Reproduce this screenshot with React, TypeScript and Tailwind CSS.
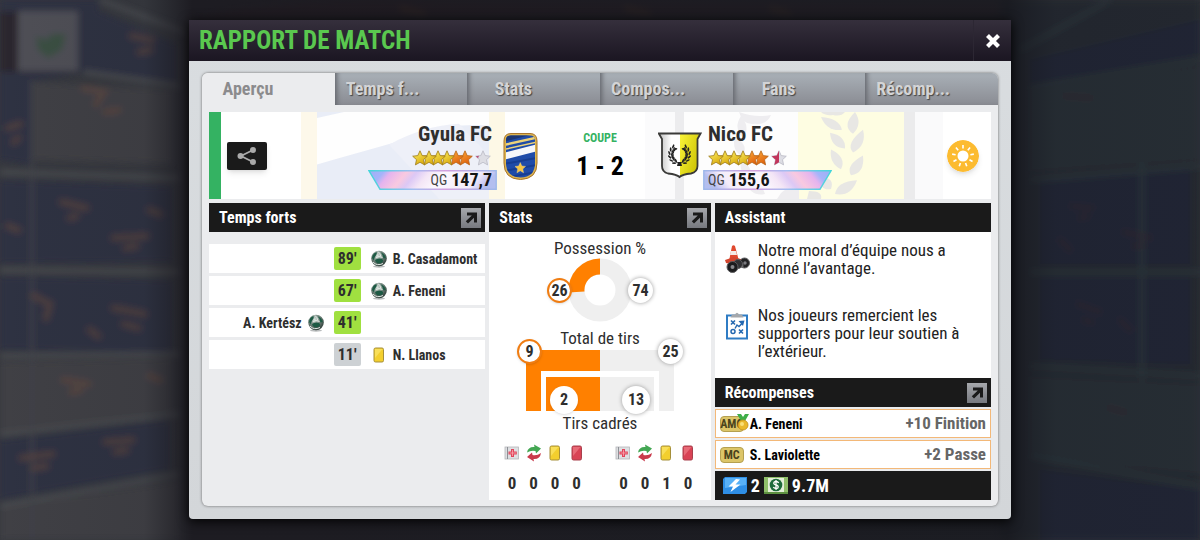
import { useState } from 'react';

const tabs = ['Aperçu', 'Temps f...', 'Stats', 'Compos...', 'Fans', 'Récomp...'];

interface MatchEvent {
  minute: string;
  player: string;
  side: 'home' | 'away';
  type: 'goal' | 'yellow';
}

const events: MatchEvent[] = [
  { minute: "89'", player: 'B. Casadamont', side: 'away', type: 'goal' },
  { minute: "67'", player: 'A. Feneni', side: 'away', type: 'goal' },
  { minute: "41'", player: 'A. Kertész', side: 'home', type: 'goal' },
  { minute: "11'", player: 'N. Llanos', side: 'away', type: 'yellow' },
];

const rewards = [
  { position: 'AMC', player: 'A. Feneni', bonus: '+10 Finition', medal: true },
  { position: 'MC', player: 'S. Laviolette', bonus: '+2 Passe', medal: false },
];

const STAR = 'M8 0.8 L10.2 5.6 L15.3 6.2 L11.5 9.7 L12.6 14.9 L8 12.3 L3.4 14.9 L4.5 9.7 L0.7 6.2 L5.8 5.6 Z';

// Blurred stadium wall behind the dialog
function Backdrop() {
  return (
    <svg className="absolute inset-0 h-full w-full" viewBox="0 0 1200 540" preserveAspectRatio="xMidYMid slice" aria-hidden="true">
      <defs>
        <filter id="soft" x="-5%" y="-5%" width="110%" height="110%">
          <feGaussianBlur stdDeviation="3" />
        </filter>
        <linearGradient id="shade" x1="0" x2="1">
          <stop offset="0" stopColor="#1b1c22" stopOpacity="0" />
          <stop offset="0.12" stopColor="#1b1c22" stopOpacity="0.1" />
          <stop offset="0.16" stopColor="#17151b" stopOpacity="0.8" />
          <stop offset="0.84" stopColor="#17181e" stopOpacity="0.85" />
          <stop offset="0.88" stopColor="#1a1e26" stopOpacity="0.35" />
          <stop offset="1" stopColor="#1a1e26" stopOpacity="0.25" />
        </linearGradient>
      </defs>
      <rect width="1200" height="540" fill="#36383e" />
      <g filter="url(#soft)">
        <path d="M0 0H100L85 72L30 82H0Z M92 8L176 44V82L84 70Z M0 80H30V165L0 160Z M0 180L172 186V262L0 264Z M0 276L172 280V352L0 350Z M0 440L170 420V470L0 500Z" fill="#2e3042" />
        <path d="M34 82L172 90V164L34 160Z M0 362L172 358V412L0 432Z M0 508L180 480V540H0Z" fill="#404145" />
        <path d="M0 172L180 178 M0 270L180 272 M0 356L180 354 M0 434L180 414 M0 506L180 474 M84 72L180 86 M100 0L190 34" fill="none" stroke="#484b50" strokeWidth="5" />
        <path d="M32 80V540" stroke="#404349" strokeWidth="3" />
        <rect x="1000" width="200" height="540" fill="#252b32" />
        <path d="M1030 60L1200 20V54L1030 84Z M1040 182L1190 170V265H1040Z M1040 278H1190V364L1040 360Z M1040 470L1200 490V540H1040Z" fill="#212638" />
        <path d="M1030 92L1200 66V160L1030 172Z M1030 376L1200 384V474L1030 458Z" fill="#293037" />
        <path d="M1020 50L1110 0 M1030 88L1200 60 M1030 180L1200 166 M1030 272H1200 M1030 366L1200 376 M1030 456L1200 486 M1142 160V380" fill="none" stroke="#2e383d" strokeWidth="5" />
        <path d="M190 18Q300 -4 440 2H1000V16H190Z" fill="#3c2e34" />
        <path d="M400 8L425 14 M625 8L650 14 M770 8L790 14" stroke="#6a4830" strokeWidth="4" />
        <g fill="none" stroke="#684a40" strokeLinecap="round" strokeWidth="7" opacity="0.5">
          <path d="M84 88L104 92L96 104M106 112L118 110M132 36L152 40M140 52L150 50M8 128L20 124M14 142L18 138M62 202L86 208M70 218L76 216" />
          <path d="M114 238L146 236M126 248L136 246M34 296L50 304L46 318M114 308L144 314M124 324L138 328M64 380L88 384M72 392L80 390" />
          <path d="M22 458L52 454M34 468L46 466M106 442L132 440M116 452L126 450M150 210L160 214M8 226L18 230M90 330L98 336M150 376L160 380" />
        </g>
        <g fill="none" stroke="#402c30" strokeLinecap="round" strokeWidth="6" opacity="0.4">
          <path d="M1072 206L1092 208M1080 218L1088 216M1124 232L1150 238M1134 246L1142 246M1078 304L1100 312M1084 320L1092 322M1066 96L1090 98M1110 408L1124 412M1060 240L1070 250M1120 320L1130 330" />
        </g>
        <rect x="0" y="12" width="78" height="60" fill="#29282f" />
        <rect x="18" y="11" width="60" height="60" fill="#504f57" />
        <path d="M36 36L46 40L52 34L66 34L62 50L48 58L38 50Z" fill="#35503f" opacity="0.8" />
      </g>
      <rect width="1200" height="540" fill="url(#shade)" />
    </svg>
  );
}

function Stars({ half = false }: { half?: boolean }) {
  return (
    <svg className="h-4 w-20" viewBox="0 0 80 16" role="img" aria-label="Étoiles">
      <defs>
        <linearGradient id="gold" x2="0.6" y2="1">
          <stop stopColor="#fff56a" />
          <stop offset="1" stopColor="#d9a90c" />
        </linearGradient>
        <linearGradient id="amber" x2="0.6" y2="1">
          <stop stopColor="#ffb03c" />
          <stop offset="1" stopColor="#dd5f0c" />
        </linearGradient>
        <clipPath id="halfStar">
          <rect width="8" height="16" />
        </clipPath>
      </defs>
      {[45, 36].map((x) => (
        <path key={x} d={STAR} transform={`translate(${x} 0)`} fill="url(#amber)" stroke="#b5661a" strokeWidth="0.8" />
      ))}
      {[27, 18, 9, 0].map((x) => (
        <path key={x} d={STAR} transform={`translate(${x} 0)`} fill="url(#gold)" stroke="#9c7a1c" strokeWidth="0.8" />
      ))}
      <g transform="translate(63 0)">
        <path d={STAR} fill="#dddde4" stroke="#b9b9c4" strokeWidth="0.8" />
        {half ? <path d={STAR} fill="#c2365c" clipPath="url(#halfStar)" /> : <path d="M0.7 6.2L4 5.8L3 8.3Z" fill="#b8507a" />}
      </g>
    </svg>
  );
}

function Ribbon({ value, side }: { value: string; side: 'home' | 'away' }) {
  const home = side === 'home';
  return (
    <div className={`relative flex h-5 w-[129px] items-center ${home ? 'justify-end pr-[5px]' : 'pl-[5px]'}`}>
      <svg className="absolute inset-0 h-full w-full" viewBox="0 0 129 20" aria-hidden="true">
        <defs>
          <linearGradient id={`holo-${side}`} x1={home ? 0 : 1} x2={home ? 1 : 0} y1="0" y2="0.12">
            <stop offset="0.02" stopColor="#9fb0f5" />
            <stop offset="0.12" stopColor="#a5b4fa" />
            <stop offset="0.18" stopColor="#e5b4ee" />
            <stop offset="0.3" stopColor="#f9c9e0" />
            <stop offset="0.38" stopColor="#dcc8f5" />
            <stop offset="0.48" stopColor="#f4e6f6" />
            <stop offset="0.6" stopColor="#fbf7fd" />
            <stop offset="0.88" stopColor="#f4ecf9" />
            <stop offset="0.97" stopColor="#c9caf3" />
            <stop offset="1" stopColor="#b3beef" />
          </linearGradient>
          <linearGradient id={`edge-${side}`} x1={home ? 0 : 1} x2={home ? 1 : 0}>
            <stop offset="0" stopColor="#43d5da" />
            <stop offset="0.35" stopColor="#a3bdf0" />
            <stop offset="0.6" stopColor="#d3a0de" />
            <stop offset="1" stopColor="#9db8ea" />
          </linearGradient>
        </defs>
        <path
          d={home ? 'M1 0.8H128.2V19.2H12Z' : 'M0.8 0.8H128L117 19.2H0.8Z'}
          fill={`url(#holo-${side})`}
          stroke={`url(#edge-${side})`}
          strokeWidth="1.4"
        />
      </svg>
      <span className="relative text-sm leading-5 text-[#444]">QG</span>
      <span className="relative ml-1 text-lg leading-5 font-bold text-[#151515]">{value}</span>
    </div>
  );
}

function HomeCrest() {
  return (
    <svg className="h-12 w-11" viewBox="0 0 44 48" role="img" aria-label="Gyula FC">
      <defs>
        <clipPath id="homeShape">
          <path d="M8 8Q8 3.500 13 3.500H32Q37 3.500 37 8V31Q37 45 22.500 45.500Q8 45 8 31Z" />
        </clipPath>
      </defs>
      <path d="M6 9Q6 1.500 13 1.500H32Q39 1.500 39 9V31Q39 47 22.500 47.500Q6 47 6 31Z" fill="#dcb550" stroke="#a9742b" strokeWidth="1" />
      <g clipPath="url(#homeShape)">
        <rect width="44" height="48" fill="#1f4ba8" />
        <path d="M0 32L44 24V26L0 34Z M0 39L44 31V33L0 41Z M0 46L44 38V40L0 48Z" fill="#173d90" />
        <path d="M5 3H32L5 10Z" fill="#1c3672" />
        <path d="M5 12L40 4V6.500L5 14.500Z" fill="#ecd27a" />
        <path d="M5 17L40 9V10.500L5 18.500Z" fill="#ecd27a" />
        <path d="M5 21L40 12V19L5 28Z" fill="#f6f7fb" />
      </g>
      <path d={STAR} transform="translate(16.500 30) scale(0.72)" fill="#f6c544" stroke="#f0d88a" strokeWidth="0.6" />
    </svg>
  );
}

function AwayCrest() {
  const leaves = [0, 1, 2, 3, 4, 5];
  return (
    <svg className="h-12 w-11" viewBox="0 0 44 48" role="img" aria-label="Nico FC">
      <defs>
        <clipPath id="awayShape">
          <path d="M0.800 1.500H42.500L39.500 7V34Q39.500 40 33 41.500Q24 42.500 21.500 45Q19 42.500 10 41.500Q4 40 4 34V7Z" />
        </clipPath>
        <linearGradient id="silver" x2="1">
          <stop stopColor="#b9b9b9" />
          <stop offset="0.6" stopColor="#fff" />
        </linearGradient>
        <linearGradient id="lemon" x2="1" y2="0.6">
          <stop stopColor="#fbf53a" />
          <stop offset="1" stopColor="#c9bf00" />
        </linearGradient>
      </defs>
      <g clipPath="url(#awayShape)">
        <rect width="22" height="48" fill="url(#silver)" />
        <rect x="22" width="22" height="48" fill="url(#lemon)" />
      </g>
      <path d="M0.800 1.500H42.500L39.500 7V34Q39.500 40 33 41.500Q24 42.500 21.500 45Q19 42.500 10 41.500Q4 40 4 34V7Z" fill="none" stroke="#3a3a38" strokeWidth="1.800" />
      <path d="M20.500 31Q14 29 13.500 23Q13.500 18 17 15 M22.500 31Q29 29 29.500 23Q29.500 18 26 15" fill="none" stroke="#222" strokeWidth="0.8" />
      <g fill="#222">
        {leaves.map((i) => {
          const a = 52 - i * 22;
          return (
            <g key={i}>
              <g transform={`rotate(${a} 21.500 22.500) translate(13 22.500)`}>
                <ellipse rx="0.900" ry="2.200" transform="translate(-1.700 0) rotate(-30)" />
                <ellipse rx="0.900" ry="2.200" transform="translate(1.500 0) rotate(30)" />
              </g>
              <g transform={`rotate(${-a} 21.500 22.500) translate(30 22.500)`}>
                <ellipse rx="0.900" ry="2.200" transform="translate(1.700 0) rotate(30)" />
                <ellipse rx="0.900" ry="2.200" transform="translate(-1.500 0) rotate(-30)" />
              </g>
            </g>
          );
        })}
        <path d="M20 30H23L24 34H19Z" />
      </g>
    </svg>
  );
}

// Washed-out flags of both clubs behind the score
function BannerFlags() {
  return (
    <svg className="absolute inset-0 h-full w-full" viewBox="0 0 782 88" preserveAspectRatio="none" aria-hidden="true">
      <rect x="92" width="16" height="88" fill="#fdf8ea" />
      <rect x="108" width="172" height="88" fill="#fefefe" />
      <path d="M108 0H135L108 6Z M108 53Q200 27 240 15Q262 12 280 14V88H108Z" fill="#e9edf7" />
      <path d="M180 33Q215 14 250 12L280 44V88H230Z" fill="#eef0f8" />
      <rect x="280" width="16" height="88" fill="#fdf8e6" />
      <rect x="436" width="30" height="88" fill="#fbfbfc" />
      <rect x="466" width="9" height="88" fill="#ececee" />
      <rect x="475" width="114" height="88" fill="#fdfdfd" />
      <rect x="589" width="106" height="88" fill="#fefde2" />
      <rect x="695" width="11" height="88" fill="#ebebec" />
      <rect x="706" width="28" height="88" fill="#fafafb" />
      <g fill="#e8e7e4">
        <path d="M612 0H636Q632 5 624 3Q616 4 612 0Z" />
        <path d="M612 5Q630 6 633 18Q618 20 612 5Z" />
        <path d="M646 0Q654 12 644 22Q632 14 646 0Z" />
        <path d="M621 21Q637 24 636 37Q622 36 621 21Z" />
        <path d="M654 18Q658 34 644 41Q636 32 654 18Z" />
        <path d="M622 38Q638 46 632 58Q620 52 622 38Z" />
        <path d="M654 44Q656 62 642 64Q636 54 654 44Z" />
        <path d="M648 69Q642 86 626 83Q628 70 648 69Z" />
        <path d="M612 66Q626 66 622 78Q610 80 612 66Z" />
        <path d="M600 80Q614 80 612 88H598Z" />
      </g>
      <g fill="#eeedf0">
        <path d="M530 0Q546 6 562 3Q558 13 546 12Q534 14 530 0Z" />
        <path d="M532 4Q542 16 534 26Q524 16 532 4Z" />
        <path d="M526 26Q540 32 534 46Q522 38 526 26Z" />
        <path d="M532 50Q544 54 542 68Q530 64 532 50Z" />
        <path d="M536 70Q552 70 556 83Q542 86 536 70Z" />
        <path d="M572 82Q580 74 590 78V88H568Z" />
      </g>
    </svg>
  );
}

function Ball() {
  return (
    <svg className="h-[18px] w-[18px]" viewBox="0 0 18 18" aria-hidden="true">
      <defs>
        <radialGradient id="ball" cx="0.4" cy="0.3" r="0.8">
          <stop stopColor="#d7e2dc" />
          <stop offset="0.5" stopColor="#6a7d75" />
          <stop offset="1" stopColor="#1d2a26" />
        </radialGradient>
      </defs>
      <ellipse cx="9" cy="16.500" rx="6" ry="1.200" fill="#b9bcbd" />
      <circle cx="9" cy="8.500" r="7.800" fill="url(#ball)" />
      <path d="M2 8Q2.500 3 6.500 2Q7.500 4 5.500 6Q4 8 4 10.500Z M5 10Q8 7.500 12 9Q14.500 11 11.500 13Q6 14.500 5 10Z M10.500 2Q15 4 15.800 8L13.500 8.500Q13 5 10.500 2Z" fill="#1d5a44" />
      <path d="M8 1.500Q10 3 11 6.500M6 7.500Q9 5.500 12.500 7.500M3 12Q7 16.500 13 13.500" fill="none" stroke="#e3ebe7" strokeWidth="1" />
    </svg>
  );
}

function Card({ color }: { color: 'yellow' | 'red' }) {
  const red = color === 'red';
  return (
    <svg className="h-[18px] w-[18px]" viewBox="0 0 18 18" role="img" aria-label={red ? 'Carton rouge' : 'Carton jaune'}>
      <rect x="4" y="2" width="9.500" height="14" rx="1.500" fill={red ? '#d94355' : '#f3cf2e'} stroke={red ? '#a8404c' : '#a58f3a'} />
      <path d="M5 3H12.500L5 12Z" fill={red ? '#ee7b86' : '#fbe66c'} opacity="0.7" />
    </svg>
  );
}

function Injury() {
  return (
    <svg className="h-[18px] w-[18px]" viewBox="0 0 18 18" role="img" aria-label="Blessures">
      <rect x="2" y="3" width="13.500" height="12" fill="#dedfe2" stroke="#b4b6ba" strokeWidth="0.8" />
      <path d="M4.500 3V15" stroke="#8d9096" strokeWidth="1" />
      <path d="M8 5H11V7.500H13.800V10.500H11V13H8V10.500H5.500V7.500H8Z" fill="#e2455a" />
      <path d="M9.500 6V12 M6.500 9H13" stroke="#f7a7b0" strokeWidth="0.8" />
    </svg>
  );
}

function Substitution() {
  return (
    <svg className="h-[18px] w-[18px]" viewBox="0 0 18 18" role="img" aria-label="Remplacements">
      <path d="M2 8.500Q3 2.500 9.500 3L9 0.500L16 4.500L11 9.500L10.500 7Q6 6 2 8.500Z" fill="#43a753" />
      <path d="M16 9Q15 15.500 8.500 15L9 17.500L2 13L7 8.500L7.500 11Q12 12 16 9Z" fill="#c93a4b" />
    </svg>
  );
}

function PanelHeader({ title, link = true }: { title: string; link?: boolean }) {
  return (
    <div className="flex h-[29px] items-center justify-between bg-[#1a1a1a] pr-1 pl-[10px]">
      <h2 className="text-base leading-5 font-bold text-white">{title}</h2>
      {link && (
        <button
          type="button"
          aria-label={`Ouvrir ${title}`}
          className="flex h-5 w-5 items-center justify-center bg-linear-to-b from-[#a6a8ac] to-[#77797f]"
        >
          <svg className="h-4 w-4" viewBox="0 0 16 16" aria-hidden="true">
            <path d="M4 2.500H14V12.500H11V7.700L5 13.500L2.800 11.300L8.800 5.500H4Z" fill="#1a1a1a" />
          </svg>
        </button>
      )}
    </div>
  );
}

function EventRow({ event }: { event: MatchEvent }) {
  const icon = event.type === 'goal' ? <Ball /> : <Card color="yellow" />;
  return (
    <li className="grid h-[29px] grid-cols-[minmax(0,1fr)_27px_minmax(0,1fr)] items-center gap-[9px] bg-white text-sm font-bold text-[#2e2e2e]">
      <span className="flex items-center justify-end gap-[5px]">
        {event.side === 'home' && (
          <>
            {event.player}
            {icon}
          </>
        )}
      </span>
      <span
        className={`h-[23px] rounded-xs text-center text-base leading-[23px] ${event.type === 'goal' ? 'bg-[#a0e040]' : 'bg-[#cdd1d4]'}`}
      >
        {event.minute}
      </span>
      <span className="flex items-center gap-[5px] whitespace-nowrap">
        {event.side === 'away' && (
          <>
            {icon}
            {event.player}
          </>
        )}
      </span>
    </li>
  );
}

function Possession() {
  return (
    <div className="relative mx-auto h-16 w-[106px]">
      <svg className="mx-auto h-16 w-16" viewBox="0 0 64 64" aria-hidden="true">
        <circle cx="32" cy="32" r="23.500" fill="none" stroke="#efefef" strokeWidth="16" />
        <path d="M32 0.500V16.500A15.500 15.500 0 0 0 16.500 33.500L0.600 34.500A31.500 31.500 0 0 1 32 0.500Z" fill="#ff8000" />
      </svg>
      <span className="absolute top-5 left-0 h-[25px] w-[25px] rounded-full border-2 border-[#f07d12] bg-white text-center text-base leading-[21px] font-bold shadow">
        26
      </span>
      <span className="absolute top-5 right-0 h-[25px] w-[25px] rounded-full bg-white text-center text-base leading-[25px] font-bold shadow-[0_0_4px_#999]">
        74
      </span>
    </div>
  );
}

function Shots() {
  return (
    <div className="relative mx-auto h-[61px] w-[148px]">
      <svg className="h-[61px] w-[148px]" viewBox="0 0 148 61" aria-hidden="true">
        <path d="M0 0H74V21H15V61H0Z M20 27H74V61H20Z" fill="#ff8000" />
        <path d="M74 0H148V61H133V21H74Z M74 27H128V61H74Z" fill="#efefef" />
      </svg>
      <span className="absolute -top-[11px] -left-[9px] h-[25px] w-[25px] rounded-full border-2 border-[#f07d12] bg-white text-center text-base leading-[21px] font-bold shadow">
        9
      </span>
      <span className="absolute -top-[11px] -right-[9px] h-[25px] w-[25px] rounded-full bg-white text-center text-base leading-[25px] font-bold shadow-[0_0_4px_#999]">
        25
      </span>
      <span className="absolute top-9 left-6 h-7 w-7 rounded-full bg-white text-center text-base leading-7 font-bold shadow">
        2
      </span>
      <span className="absolute top-9 right-6 h-7 w-7 rounded-full bg-white text-center text-base leading-7 font-bold shadow-[0_0_4px_#999]">
        13
      </span>
    </div>
  );
}

function TeamCounts({ counts }: { counts: number[] }) {
  const icons = [<Injury />, <Substitution />, <Card color="yellow" />, <Card color="red" />];
  return (
    <ul className="grid w-[86px] grid-cols-4">
      {counts.map((count, i) => (
        <li key={i} className="flex flex-col items-center gap-[11px]">
          {icons[i]}
          <span className="text-[17px] leading-5 font-bold">{count}</span>
        </li>
      ))}
    </ul>
  );
}

function ConeIcon() {
  return (
    <svg className="my-1 h-[30px] w-[26px] shrink-0" viewBox="0 0 26 30" aria-hidden="true">
      <path d="M8 2Q9.500 0.500 11 2L15 17L5 17Z" fill="#e0492f" />
      <path d="M7 7H12L13 11H6Z" fill="#f4eae6" />
      <path d="M1 16L10 13L20 16L12 21L2 19Z" fill="#d3452e" />
      <g stroke="#5c5c5e" strokeWidth="1">
        <circle cx="20.500" cy="19" r="5" fill="#222224" />
        <rect x="9" y="20" width="10" height="3" fill="#a0a0a3" />
        <circle cx="14" cy="20" r="4.500" fill="#303033" />
        <circle cx="8.500" cy="23" r="5.500" fill="#1c1c1e" />
      </g>
      <circle cx="8.500" cy="23" r="2" fill="#87878b" />
      <circle cx="21" cy="19" r="1.700" fill="#7b7b80" />
    </svg>
  );
}

function TacticsIcon() {
  return (
    <svg className="my-1 h-[30px] w-[26px] shrink-0" viewBox="0 0 26 30" aria-hidden="true">
      <rect x="3" y="5.500" width="20" height="23" fill="#fff" stroke="#2f7cc4" strokeWidth="2" />
      <path d="M8 4.500H11Q13 1 15 4.500H18L19.500 7.500H6.500Z" fill="#a5a8ac" />
      <path d="M7 10.500L11 14.500M11 10.500L7 14.500M15 19.500L19 23.500M19 19.500L15 23.500" stroke="#2468b0" strokeWidth="1.600" />
      <circle cx="9" cy="21.500" r="2" fill="none" stroke="#2468b0" strokeWidth="1.500" />
      <path d="M11 18.500L13 15L15 16.500L18 13.500" fill="none" stroke="#2468b0" strokeWidth="1.500" />
      <path d="M14.500 11L20.500 10.500L19 16Z" fill="#2468b0" />
    </svg>
  );
}

export default function App() {
  const [activeTab, setActiveTab] = useState(0);

  return (
    <div className="relative flex min-h-screen items-start justify-center overflow-hidden bg-[#23252d] pt-5 pb-5 font-['Roboto_Condensed','Roboto',sans-serif] text-[#2e2e2e]">
      <Backdrop />
      <main className="relative w-full max-w-[822px] rounded-b bg-linear-to-b from-[#d9dde0] to-[#d3d6d9] shadow-[0_2px_12px_#000]">
        <header className="flex h-[41px] items-stretch justify-between bg-linear-to-b from-[#352f3c] to-[#1b1622]">
          <h1 className="pl-[10px] text-[25px] leading-[41px] font-bold text-[#5ac84f]">RAPPORT DE MATCH</h1>
          <button type="button" aria-label="Fermer" className="flex w-[38px] items-center justify-center border-l border-[#2c2733]">
            <svg className="h-4 w-4" viewBox="0 0 16 16" aria-hidden="true">
              <path d="M2.500 2.500L13.500 13.500M13.500 2.500L2.500 13.500" stroke="#fff" strokeWidth="4.200" />
            </svg>
          </button>
        </header>

        <div className="px-[13px] pt-3 pb-[13px]">
          <div className="rounded-md bg-[#ebecee] shadow-[0_0_3px_#666]">
            <div role="tablist" className="grid grid-cols-6 overflow-hidden rounded-t-md">
              {tabs.map((tab, i) => (
                <button
                  key={tab}
                  type="button"
                  role="tab"
                  aria-selected={i === activeTab}
                  onClick={() => setActiveTab(i)}
                  className={`flex h-8 items-center pl-[11px] text-lg font-bold ${
                    i === activeTab
                      ? 'bg-[#ebecee] text-[#8b8b8d]'
                      : 'bg-linear-to-b from-[#a9b0b7] to-[#8a8c93] text-[#d3d4d6] shadow-[inset_5px_0_5px_-3px_#63666c] [text-shadow:1px_1px_1px_#444]'
                  }`}
                >
                  <span className="w-[70px] text-center whitespace-nowrap">{tab}</span>
                </button>
              ))}
            </div>

            <div className="flex flex-col gap-1 px-[7px] pt-[7px] pb-[6px]">
              <section className="relative grid h-[87px] grid-cols-[1fr_116px_1fr] bg-white">
                <BannerFlags />
                <div className="relative flex justify-between">
                  <div className="flex items-center gap-[6px]">
                    <div className="h-full w-3 bg-[#34b262]" />
                    <button
                      type="button"
                      aria-label="Partager"
                      className="flex h-7 w-10 items-center justify-center rounded-xs bg-[#1a1a1a] shadow-md"
                    >
                      <svg className="h-5 w-5" viewBox="0 0 20 20" aria-hidden="true">
                        <path d="M16 4L4 10L16 16" fill="none" stroke="#aaa" strokeWidth="1.800" />
                        <g fill="#aaa">
                          <circle cx="16" cy="4" r="3" />
                          <circle cx="3.500" cy="10" r="3" />
                          <circle cx="16" cy="16" r="3" />
                        </g>
                      </svg>
                    </button>
                  </div>
                  <div className="flex items-center gap-px">
                    <div className="flex h-full flex-col items-end justify-end gap-1 pb-[9px]">
                      <p className="pr-[5px] text-[21px] leading-6 font-bold whitespace-nowrap">Gyula FC</p>
                      <div className="pr-[5px]">
                        <Stars />
                      </div>
                      <Ribbon value="147,7" side="home" />
                    </div>
                    <HomeCrest />
                  </div>
                </div>

                <div className="relative flex flex-col items-center justify-center gap-1">
                  <p className="text-xs leading-4 font-bold text-[#34b262]">COUPE</p>
                  <p className="text-[26px] leading-8 font-bold text-black">1 - 2</p>
                </div>

                <div className="relative flex items-center justify-between pr-3">
                  <div className="flex h-full items-center gap-px">
                    <AwayCrest />
                    <div className="flex h-full flex-col justify-end gap-1 pb-[9px]">
                      <p className="pl-[5px] text-[21px] leading-6 font-bold whitespace-nowrap">Nico FC</p>
                      <div className="pl-[5px]">
                        <Stars half />
                      </div>
                      <Ribbon value="155,6" side="away" />
                    </div>
                  </div>
                  <svg className="h-8 w-8 rounded-full shadow-md" viewBox="0 0 32 32" role="img" aria-label="Ensoleillé">
                    <circle cx="16" cy="16" r="16" fill="#fcbb30" />
                    <circle cx="16" cy="16" r="5.500" fill="#fff" />
                    {[0, 1, 2, 3, 4, 5, 6, 7, 8].map((i) => (
                      <path key={i} d="M16 5V8.500" transform={`rotate(${i * 40} 16 16)`} stroke="#fff" strokeWidth="1.600" />
                    ))}
                  </svg>
                </div>
              </section>

              <div className="grid grid-cols-[277fr_222fr_277fr] gap-1">
                <section>
                  <PanelHeader title="Temps forts" />
                  <ul className="mt-3 flex flex-col gap-[3px]">
                    {events.map((event) => (
                      <EventRow key={event.minute} event={event} />
                    ))}
                  </ul>
                </section>

                <section className="bg-white">
                  <PanelHeader title="Stats" />
                  <div className="flex flex-col pt-[6px] text-center">
                    <h3 className="text-[17px] leading-5">Possession %</h3>
                    <Possession />
                    <h3 className="mt-[6px] mb-[2px] text-[17px] leading-5">Total de tirs</h3>
                    <Shots />
                    <h3 className="mt-[2px] text-[17px] leading-5">Tirs cadrés</h3>
                    <div className="mt-[11px] flex justify-between px-3">
                      <TeamCounts counts={[0, 0, 0, 0]} />
                      <TeamCounts counts={[0, 0, 1, 0]} />
                    </div>
                  </div>
                </section>

                <section className="flex flex-col bg-white">
                  <PanelHeader title="Assistant" link={false} />
                  <div className="flex grow flex-col gap-7 pt-2 pr-6 pb-[18px] pl-[9px] text-[17px] leading-[18px] text-[#222]">
                    <div className="flex items-center gap-2">
                      <ConeIcon />
                      <p>Notre moral d’équipe nous a donné l’avantage.</p>
                    </div>
                    <div className="flex items-start gap-2">
                      <TacticsIcon />
                      <p>Nos joueurs remercient les supporters pour leur soutien à l’extérieur.</p>
                    </div>
                  </div>

                  <PanelHeader title="Récompenses" />
                  <ul className="flex flex-col gap-[2px] bg-[#ebecee] py-[2px]">
                    {rewards.map((reward) => (
                      <li
                        key={reward.player}
                        className="flex h-[29px] items-center justify-between border border-[#f3b878] bg-white px-1"
                      >
                        <div className="flex items-center gap-[6px] text-sm font-bold text-black">
                          <span className="relative flex h-4 w-6 items-center justify-center rounded-sm border border-[#b5a050] bg-[#dcc568] text-xs text-[#4a431c]">
                            {reward.position}
                            {reward.medal && (
                              <svg className="absolute -top-[4px] -right-[6px] h-[18px] w-3" viewBox="0 0 12 18" aria-hidden="true">
                                <path d="M0 1H4L6 4L8 1H12L8 8H4Z" fill="#3fae49" />
                                <circle cx="6" cy="12" r="5" fill="#eab82c" stroke="#c08e1a" strokeWidth="0.8" />
                                <circle cx="5" cy="11" r="2" fill="#f9e07a" />
                              </svg>
                            )}
                          </span>
                          {reward.player}
                        </div>
                        <span className="text-[17px] font-bold text-[#666]">{reward.bonus}</span>
                      </li>
                    ))}
                  </ul>
                  <div className="flex h-[29px] items-center gap-1 bg-[#1a1a1a] px-2 text-lg font-bold text-white">
                    <svg className="h-[17px] w-6" viewBox="0 0 24 17" role="img" aria-label="Repos">
                      <path d="M0 2L2 0H24V15L22 17H0Z" fill="#2f8fe6" />
                      <path d="M2 1H23V8L2 11Z" fill="#58b1f7" />
                      <path d="M13 2L5.500 9.500H10L7.500 15L17.500 7.500H12.500L17 2.500Z" fill="#fff" />
                    </svg>
                    <span>2</span>
                    <svg className="h-[17px] w-6" viewBox="0 0 24 17" role="img" aria-label="Argent">
                      <rect width="24" height="17" fill="#8fbf6a" />
                      <rect x="4" y="1" width="16" height="14" fill="#e4f0da" />
                      <path d="M0 15H24V17H0Z" fill="#5d9140" />
                      <circle cx="12" cy="8" r="6.300" fill="#1d6b3c" />
                      <path d="M14.800 5.800Q12 3.500 10 5.200Q9 7.200 12 8Q15 8.800 14 10.800Q12 12.500 9.200 10.200M12 3V13" fill="none" stroke="#fff" strokeWidth="1.300" />
                    </svg>
                    <span>9.7M</span>
                  </div>
                </section>
              </div>
            </div>
          </div>
        </div>
      </main>
    </div>
  );
}
